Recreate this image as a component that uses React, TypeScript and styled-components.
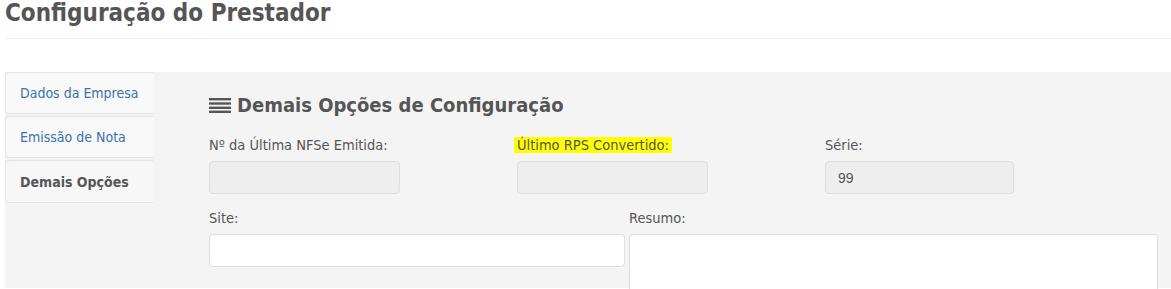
import React from 'react';
import styled, { createGlobalStyle } from 'styled-components';

const GlobalStyle = createGlobalStyle`
  html, body {
    margin: 0;
    padding: 0;
    background: #ffffff;
    font-family: "DejaVu Sans Condensed", "DejaVu Sans", sans-serif;
    color: #555555;
    overflow: hidden;
  }
  * { box-sizing: border-box; }
`;

const Page = styled.div`
  width: 1171px;
  height: 289px;
  overflow: hidden;
  padding: 0 0 0 5px;
`;

const PageTitle = styled.h1`
  margin: 0;
  height: 39px;
  font-size: 24px;
  font-weight: bold;
  color: #555555;
  line-height: 27px;
  border-bottom: 1px solid #eeeeee;
`;

const Panel = styled.div`
  margin-top: 33px;
  display: flex;
  background: #f4f4f4;
  height: 216px;
`;

const TabList = styled.div`
  width: 148px;
  display: flex;
  flex-direction: column;
  gap: 2px;
  flex-shrink: 0;
`;

const Tab = styled.div<{ $active?: boolean }>`
  height: ${(p) => (p.$active ? '43px' : '42px')};
  display: flex;
  align-items: center;
  padding-left: 14px;
  font-size: 14px;
  background: ${(p) => (p.$active ? '#f7f7f7' : '#f9f9f9')};
  border: 1px solid #e3e3e3;
  border-right: none;
  border-radius: 4px 0 0 4px;
  color: ${(p) => (p.$active ? '#555555' : '#3a72ad')};
  font-weight: ${(p) => (p.$active ? 'bold' : 'normal')};
`;

const Content = styled.div`
  flex: 1;
  padding: 20px 0 0 56px;
`;

const Heading = styled.h3`
  margin: 0 0 18px 0;
  display: flex;
  align-items: center;
  gap: 6px;
  font-size: 20px;
  font-weight: bold;
  color: #555555;
  height: 26px;
`;

const Row = styled.div<{ $cols: string }>`
  display: grid;
  grid-template-columns: ${(p) => p.$cols};
  margin-bottom: 15px;
`;

const Field = styled.div`
  display: flex;
  flex-direction: column;
`;

const Label = styled.label`
  font-size: 14.5px;
  color: #555555;
  height: 18px;
  line-height: 18px;
  margin-bottom: 7px;
  align-self: flex-start;
`;

const Mark = styled.span`
  background: #ffff00;
  padding: 0 3px;
  margin-left: -3px;
`;

const Input = styled.div<{ $disabled?: boolean; $width: string }>`
  width: ${(p) => p.$width};
  height: 33px;
  border: 1px solid #dddddd;
  border-radius: 4px;
  background: ${(p) => (p.$disabled ? '#eeeeee' : '#ffffff')};
  font-size: 14px;
  font-family: "Liberation Sans", Arial, sans-serif;
  color: #555555;
  padding: 0 12px;
  display: flex;
  align-items: center;
`;

const TextArea = styled.div`
  width: 529px;
  height: 70px;
  border: 1px solid #dddddd;
  border-radius: 4px;
  background: #ffffff;
  position: relative;
`;

const Grip = styled.svg`
  position: absolute;
  right: 2px;
  bottom: 2px;
`;

const BarsIcon = () => (
  <svg width="22" height="16" viewBox="0 0 22 16">
    <rect x="0" y="1" width="22" height="2.4" fill="#555" />
    <rect x="0" y="5.3" width="22" height="2.4" fill="#555" />
    <rect x="0" y="9.6" width="22" height="2.4" fill="#555" />
    <rect x="0" y="13.6" width="22" height="2.4" fill="#555" />
  </svg>
);

const App = () => {
  return (
    <Page>
      <GlobalStyle />
      <PageTitle>Configuração do Prestador</PageTitle>
      <Panel>
        <TabList>
          <Tab>Dados da Empresa</Tab>
          <Tab>Emissão de Nota</Tab>
          <Tab $active>Demais Opções</Tab>
        </TabList>
        <Content>
          <Heading>
            <BarsIcon />
            Demais Opções de Configuração
          </Heading>
          <Row $cols="308px 308px 308px">
            <Field>
              <Label>Nº da Última NFSe Emitida:</Label>
              <Input $disabled $width="191px" />
            </Field>
            <Field>
              <Label>
                <Mark>Último RPS Convertido:</Mark>
              </Label>
              <Input $disabled $width="191px" />
            </Field>
            <Field>
              <Label>Série:</Label>
              <Input $disabled $width="189px">99</Input>
            </Field>
          </Row>
          <Row $cols="420px 1fr">
            <Field>
              <Label>Site:</Label>
              <Input $width="416px" />
            </Field>
            <Field>
              <Label>Resumo:</Label>
              <TextArea>
                <Grip width="10" height="10" viewBox="0 0 10 10">
                  <line x1="2" y1="9" x2="9" y2="2" stroke="#777" strokeWidth="1" />
                  <line x1="6" y1="9" x2="9" y2="6" stroke="#777" strokeWidth="1" />
                </Grip>
              </TextArea>
            </Field>
          </Row>
        </Content>
      </Panel>
    </Page>
  );
};

export default App;
